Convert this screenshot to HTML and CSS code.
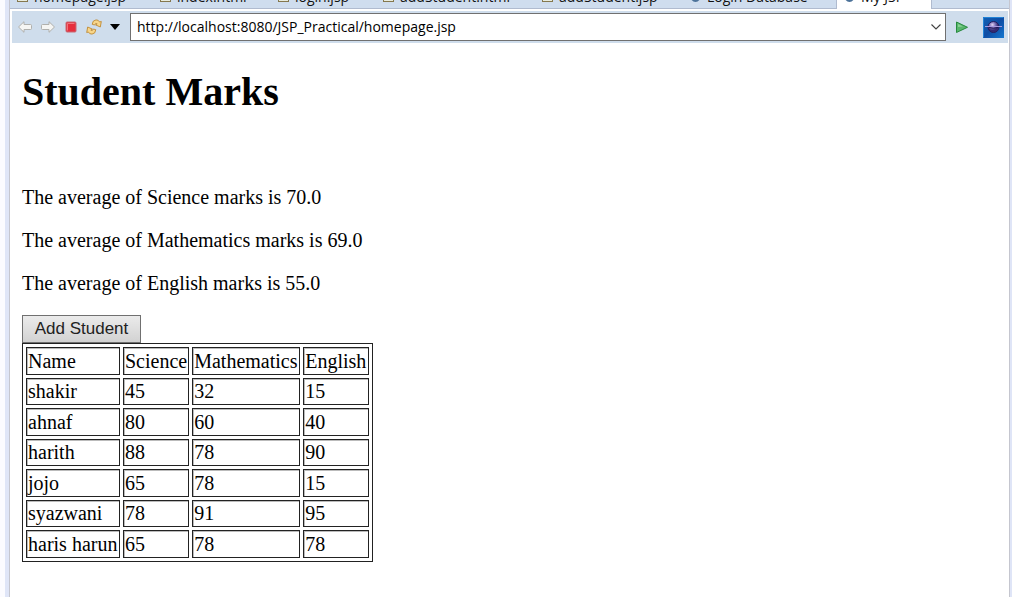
FILE: index.html
```html
<!DOCTYPE html>
<html lang="en">
<head>
<meta charset="utf-8">
<title>My JSP</title>
<link rel="stylesheet" href="styles.css">
</head>
<body>
<div class="editor">
  <nav class="tabs">
    <button class="tab tab-home"><span class="file-icon"></span>homepage.jsp</button>
    <button class="tab tab-index"><span class="file-icon"></span>index.html</button>
    <button class="tab tab-login"><span class="file-icon"></span>login.jsp</button>
    <button class="tab tab-add-html"><span class="file-icon"></span>addStudent.html</button>
    <button class="tab tab-add-jsp"><span class="file-icon"></span>addStudent.jsp</button>
    <button class="tab tab-database"><span class="globe-icon"></span>Login Database</button>
    <button class="tab tab-active"><span class="globe-icon"></span>My JSP</button>
    <span class="tab-rest"></span>
  </nav>
  <div class="toolbar">
    <button class="tool" aria-label="Back"><svg width="16" height="16" viewBox="0 0 16 16"><path d="M1.500 8 7 2.700V5.500H13.500Q14.500 5.500 14.500 6.500V9.500Q14.500 10.500 13.500 10.500H7V13.300Z" fill="#f5f5f3" stroke="#b0b0ad"/></svg></button>
    <button class="tool" aria-label="Forward"><svg width="16" height="16" viewBox="0 0 16 16"><path d="M14.500 8 9 2.700V5.500H2.500Q1.500 5.500 1.500 6.500V9.500Q1.500 10.500 2.500 10.500H9V13.300Z" fill="#f5f5f3" stroke="#b0b0ad"/></svg></button>
    <button class="tool" aria-label="Stop"><svg width="16" height="16" viewBox="0 0 16 16"><rect x="3" y="3" width="10" height="10" rx="1" fill="#e62e3c" stroke="#c66a74"/><path d="M4.500 11.500V4.500H11.500" fill="none" stroke="#f2727a"/></svg></button>
    <button class="tool" aria-label="Refresh"><svg width="16" height="16" viewBox="0 0 16 16"><g fill="#f8d68a" stroke="#c08a32" stroke-width=".9" stroke-linejoin="round"><path d="M6.200 5.300Q6.500 1.200 10 .900 12.500.700 13.600 3L15.300 2.500 14.300 8 9.600 5.900 11.200 4.900Q9.500 3.400 8.600 6Z"/><path d="M9.800 10.700Q9.500 14.800 6 15.100 3.500 15.300 2.400 13L.7 13.500 1.700 8 6.400 10.100 4.800 11.100Q6.500 12.600 7.400 10Z"/></g></svg></button>
    <button class="menu-arrow" aria-label="Refresh options"><svg width="10" height="6" viewBox="0 0 10 6"><path d="M0 0H10L5 6Z"/></svg></button>
    <div class="address">
      <input type="text" aria-label="Address" value="http://localhost:8080/JSP_Practical/homepage.jsp">
      <button class="address-toggle" aria-label="Show addresses"><svg width="10" height="6" viewBox="0 0 10 6"><path d="M.5.500 5 5 9.500.500" fill="none" stroke="#404040" stroke-width="1.100"/></svg></button>
    </div>
    <button class="tool go" aria-label="Go"><svg width="16" height="16" viewBox="0 0 16 16"><path d="M2.500 3V13.500L13.500 8.300Z" fill="#58b66c" stroke="#278a3e" stroke-linejoin="round"/><path d="M4 5V8L9 7.500Z" fill="#8bd295"/></svg></button>
    <button class="browser" aria-label="Open in external browser"><svg width="21" height="21" viewBox="0 0 21 21"><defs><linearGradient id="sky" x2="1" y2="1"><stop stop-color="#1260b4"/><stop offset=".5" stop-color="#0f4da4"/><stop offset="1" stop-color="#1678d0"/></linearGradient><radialGradient id="orb" cx=".4" cy=".3"><stop stop-color="#e2d8f4"/><stop offset=".45" stop-color="#8c7fc0"/><stop offset="1" stop-color="#352a72"/></radialGradient></defs><rect width="21" height="21" fill="url(#sky)"/><path d="M.5 20.500V.500H20.500" fill="none" stroke="#2383d6"/><circle cx="10.500" cy="10" r="5.500" fill="url(#orb)" stroke="#25205f"/><path d="M2 9.500H19" stroke="#a99ae0"/><path d="M6 10.500Q10.500 12 15 10.500" fill="none" stroke="#211455"/></svg></button>
  </div>
  <main class="page">
    <h1>Student Marks</h1>
    <p>The average of Science marks is 70.0</p>
    <p>The average of Mathematics marks is 69.0</p>
    <p>The average of English marks is 55.0</p>
    <button class="add">Add Student</button>
    <table class="marks">
      <tr><td class="name">Name</td><td class="science">Science</td><td class="math">Mathematics</td><td class="english">English</td></tr>
      <tr><td>shakir</td><td>45</td><td>32</td><td>15</td></tr>
      <tr><td>ahnaf</td><td>80</td><td>60</td><td>40</td></tr>
      <tr><td>harith</td><td>88</td><td>78</td><td>90</td></tr>
      <tr><td>jojo</td><td>65</td><td>78</td><td>15</td></tr>
      <tr><td>syazwani</td><td>78</td><td>91</td><td>95</td></tr>
      <tr><td>haris harun</td><td>65</td><td>78</td><td>78</td></tr>
    </table>
  </main>
</div>
</body>
</html>
```
FILE: styles.css
```css
* { box-sizing: border-box; }
body {
  margin: 0;
  padding: 0 0 0 5px;
  background: #fbfbff;
}
button {
  margin: 0;
  padding: 0;
  border: 0;
  background: none;
  font: inherit;
  color: inherit;
}
svg { display: block; }
.editor {
  min-height: 100vh;
  display: flex;
  flex-direction: column;
  border-left: 4px solid #dfe5f7;
  border-right: 2px solid #dfe5f7;
  background: #fff;
  box-shadow: inset 1px 0 #c5c6cf, inset -1px 0 #c5c6cf;
}
.tabs {
  display: flex;
  height: 9px;
  margin: 0 1px;
  overflow: hidden;
  align-items: flex-end;
  background: #cfddee;
  font: 14px/20px "Open Sans", sans-serif;
  color: #111;
}
.tab {
  display: flex;
  align-items: center;
  gap: 6px;
  height: 22px;
  padding: 0 0 1px 7px;
  flex: none;
  border-bottom: 1px solid #b0bbcf;
  white-space: nowrap;
}
.tab-home { width: 143px; }
.tab-index { width: 118px; }
.tab-login { width: 105px; }
.tab-add-html { width: 159px; }
.tab-add-jsp { width: 148px; }
.tab-database { width: 153px; }
.tab-active {
  width: 96px;
  padding-bottom: 2px;
  border: solid #b0bbcf;
  border-width: 0 1px;
  background: #fff;
}
.tab-rest {
  flex: 1;
  height: 22px;
  border-bottom: 1px solid #b0bbcf;
}
.file-icon {
  width: 11px;
  height: 14px;
  margin-bottom: 4px;
  border: 1px solid #85784e;
  background: #e8ecdf;
}
.globe-icon {
  width: 11px;
  height: 13px;
  margin-bottom: 4px;
  border-radius: 50%;
  background: #4c7299;
}
.toolbar {
  display: flex;
  align-items: center;
  height: 32px;
  margin: 2px 2px 0 3px;
  padding: 0 4px 0 5px;
  background: #cfddec;
}
.tool { margin-right: 7px; }
.menu-arrow { margin: 0 10px 0 1px; }
.address {
  flex: 1;
  display: flex;
  align-items: center;
  height: 28px;
  border: 1px solid #707070;
  background: #fff;
}
.address input {
  flex: 1;
  min-width: 0;
  padding: 0 0 0 6px;
  border: 0;
  outline: 0;
  background: none;
  font: 14px/24px "Open Sans", sans-serif;
  color: #000;
}
.address-toggle { padding: 4px; }
.go { margin: 0 13px 0 8px; }
.page {
  padding: 25px 13px;
  font: 20px/23px "Liberation Serif", serif;
  color: #000;
}
.page h1 {
  margin: 0 0 71px;
  font-size: 40px;
  line-height: 47px;
}
.page p { margin: 0 0 20px; }
.add {
  display: block;
  width: 119px;
  height: 28px;
  border: 1px solid #707070;
  background: linear-gradient(#ebebeb, #d2d2d2);
  font: 17px/24px "Liberation Sans", sans-serif;
  color: #222;
}
.marks {
  border: 1px solid #222;
  border-collapse: separate;
  border-spacing: 3px;
}
.marks td {
  height: 28px;
  padding: 1px;
  border: 1px solid #222;
  box-shadow: inset 1px 1px #bbb;
  white-space: nowrap;
}
.marks tr:nth-child(even) td { height: 27px; }
.marks .name { width: 94px; }
.marks .science { width: 66px; }
.marks .math { width: 108px; }
.marks .english { width: 66px; }
```
